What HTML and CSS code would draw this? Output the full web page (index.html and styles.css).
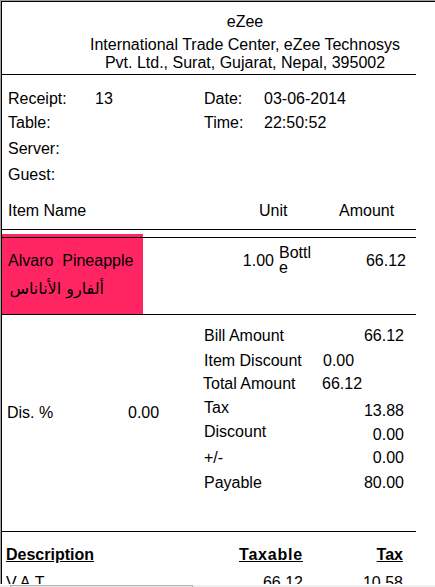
FILE: index.html
```html
<!DOCTYPE html>
<html>
<head>
<meta charset="utf-8">
<title>Receipt</title>
<link rel="stylesheet" href="styles.css">
</head>
<body>
<div class="viewport">
  <div class="frame">
    <div class="receipt">
      <header class="head">
        <div class="brand">eZee</div>
        <div class="addr">International Trade Center, eZee Technosys</div>
        <div class="addr">Pvt. Ltd., Surat, Gujarat, Nepal, 395002</div>
      </header>

      <section class="info">
        <span>Receipt:</span><span>13</span><span>Date:</span><span>03-06-2014</span>
        <span>Table:</span><span></span><span>Time:</span><span>22:50:52</span>
        <span>Server:</span><span></span><span></span><span></span>
        <span>Guest:</span><span></span><span></span><span></span>
      </section>

      <section class="items-head">
        <span class="ih-name">Item Name</span>
        <span class="ih-unit">Unit</span>
        <span class="ih-amount">Amount</span>
      </section>

      <section class="item-row">
        <div class="rule-over"></div>
        <div class="item-name">
          <div>Alvaro&nbsp; Pineapple</div>
          <div class="arabic" dir="rtl">ألفارو الأناناس</div>
        </div>
        <div class="item-qty">1.00</div>
        <div class="item-unit">Bottle</div>
        <div class="item-amount">66.12</div>
      </section>

      <section class="summary">
        <div class="disc">
          <span class="disc-label">Dis. %</span>
          <span class="disc-val">0.00</span>
        </div>
        <div class="totals">
          <div class="trow h25"><span class="tl">Bill Amount</span><span class="tv right">66.12</span></div>
          <div class="trow h23"><span class="tl">Item Discount</span><span class="tv">0.00</span></div>
          <div class="trow h24"><span class="tl shift">Total Amount</span><span class="tv">66.12</span></div>
          <div class="trow h24"><span class="tl">Tax</span><span class="tv right low">13.88</span></div>
          <div class="trow h26"><span class="tl">Discount</span><span class="tv right low">0.00</span></div>
          <div class="trow h25"><span class="tl">+/-</span><span class="tv right">0.00</span></div>
          <div class="trow h24"><span class="tl">Payable</span><span class="tv right">80.00</span></div>
        </div>
      </section>

      <section class="taxes">
        <span class="th th-desc">Description</span>
        <span class="th th-num wide">Taxable</span>
        <span class="th th-num">Tax</span>
        <span class="td">V.A.T</span>
        <span class="td td-num">66.12</span>
        <span class="td td-num">10.58</span>
      </section>
    </div>
  </div>
  <div class="hscroll"><div class="thumb"></div></div>
</div>
</body>
</html>
```

FILE: styles.css
```css
html, body {
  margin: 0;
  padding: 0;
  background: #fff;
}

body {
  font-family: "Liberation Sans", Arial, sans-serif;
  font-size: 16px;
  line-height: 18px;
  color: #000;
}

.viewport {
  height: 587px;
  overflow: hidden;
}

.frame {
  height: 583px;
  overflow: hidden;
  border-top: 1px solid #a0a0a0;
  border-left: 1px solid #a0a0a0;
}

.receipt {
  border-top: 1px solid #000;
  border-left: 1px solid #000;
  padding-right: 19px;
  padding-bottom: 20px;
}

/* header */
.head {
  padding: 11px 0 2px 72px;
  text-align: center;
  border-bottom: 1px solid #000;
}

.brand {
  margin-bottom: 5px;
}

/* info grid */
.info {
  display: grid;
  grid-template-columns: 87px 109px 60px auto;
  grid-template-rows: 24px 26px 26px 26px;
  padding: 15px 0 0 6px;
}

/* items header */
.items-head {
  display: flex;
  padding: 10px 0 9px 6px;
  border-bottom: 1px solid #000;
}

.ih-name { width: 251px; }
.ih-unit { width: 80px; }

/* item row */
.item-row {
  position: relative;
  display: flex;
  height: 80px;
  margin-top: 4px;
  border-bottom: 1px solid #000;
}

.rule-over {
  position: absolute;
  left: 0;
  right: 0;
  top: 3px;
  height: 1px;
  background: #000;
}

.item-name {
  width: 135px;
  padding: 18px 0 0 6px;
  background: #ff2563;
}

.arabic {
  font-family: "DejaVu Sans", "Noto Sans", sans-serif;
  font-size: 16px;
  line-height: 18px;
  margin-top: 10px;
  text-align: right;
  width: 96px;
}

.item-qty {
  width: 131px;
  padding-top: 18px;
  text-align: right;
}

.item-unit {
  width: 33px;
  margin-left: 5px;
  padding-top: 11px;
  line-height: 15px;
  word-break: break-all;
}

.item-amount {
  width: 94px;
  padding-top: 18px;
  text-align: right;
}

/* summary */
.summary {
  display: flex;
  padding-bottom: 33px;
  border-bottom: 1px solid #000;
}

.disc {
  width: 195px;
  padding: 89px 0 0 5px;
  display: flex;
  align-items: flex-start;
}

.disc-label { width: 121px; }

.totals {
  width: 202px;
  padding: 12px 0 0 2px;
}

.trow {
  display: flex;
}

.h23 { height: 23px; }
.h24 { height: 24px; }
.h25 { height: 25px; }
.h26 { height: 26px; }

.tl { width: 119px; }
.tl.shift { margin-left: -1px; }

.tv.right {
  width: 81px;
  text-align: right;
}
.tv.low { padding-top: 3px; }

/* taxes */
.taxes {
  display: grid;
  grid-template-columns: 233px 64px 100px;
  grid-template-rows: 28px 18px;
  padding: 14px 0 0 4px;
}

.th {
  font-weight: bold;
  text-decoration: underline;
}

.th.wide { letter-spacing: 0.8px; }

.th-desc { justify-self: start; }
.th-num { justify-self: end; }

.td-num { text-align: right; }

/* fake horizontal scrollbar */
.hscroll {
  height: 2px;
  margin-top: 1px;
  background: #f0f0f0;
}

.thumb {
  margin-left: 10px;
  width: 181px;
  height: 1px;
  border: 1px solid #b4b4b4;
  border-bottom: 0;
  background: #e6e6e6;
}
```
